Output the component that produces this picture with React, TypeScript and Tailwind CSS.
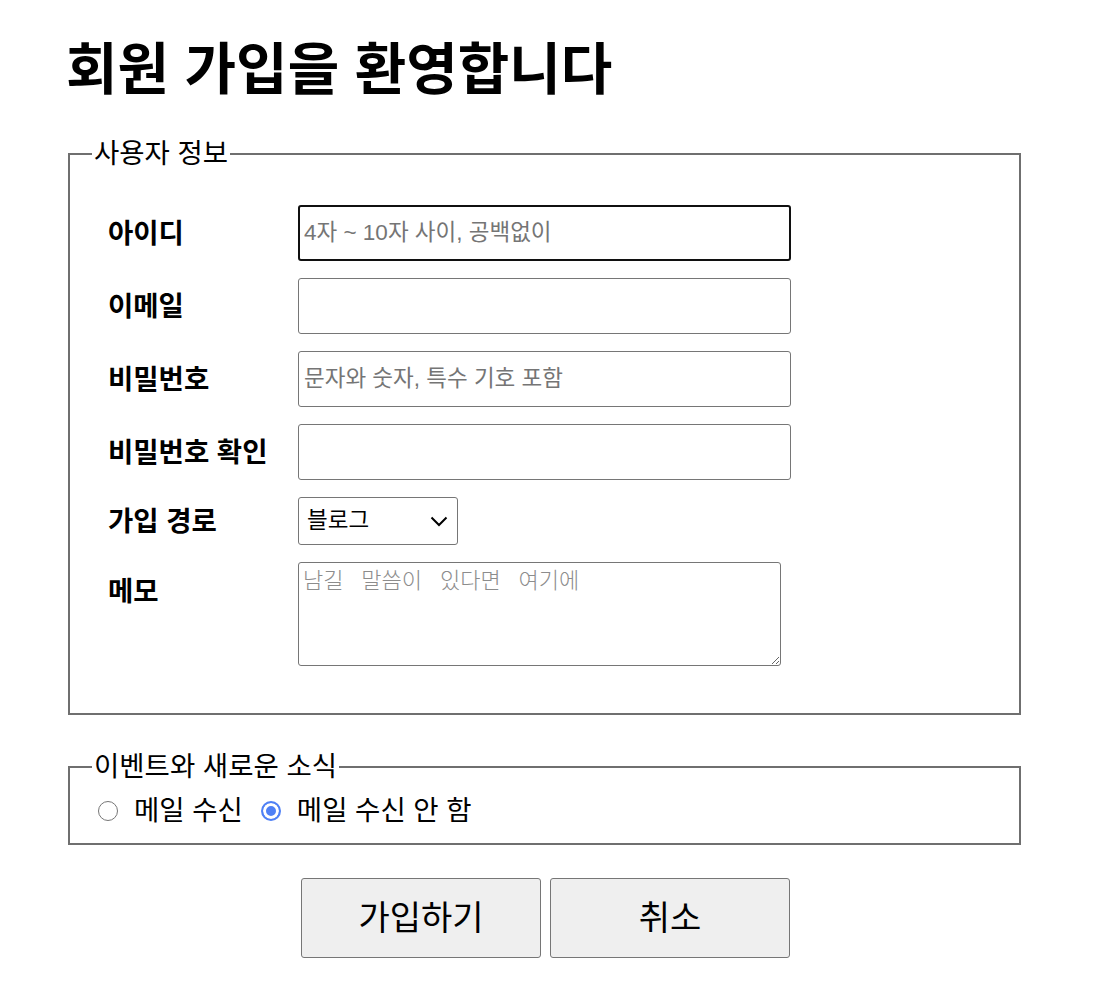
import React from 'react';

const inputBase =
  'h-[56px] w-[493px] rounded-[3px] border border-[#767676] bg-white pl-[5px] text-[22.5px] text-black placeholder:text-[#757575]';

function Row({ label, children, top }: { label: string; children: React.ReactNode; top?: boolean }) {
  return (
    <div className={top ? 'flex items-start' : 'flex items-center'}>
      <label className={'w-[190px] shrink-0 text-[27.5px] font-bold leading-[35px]' + (top ? ' mt-[12px]' : '')}>
        {label}
      </label>
      {children}
    </div>
  );
}

export default function App() {
  return (
    <div className="min-h-[1002px] bg-white pt-[42px] pl-[66px] pr-[75px] text-black font-['Liberation_Sans','Noto_Sans_CJK_KR',sans-serif]">
      <h1 className="text-[56px] font-bold leading-none">회원 가입을 환영합니다</h1>

      <fieldset className="mx-[2px] mt-[38px] border-2 border-[#6f6f6f] px-[22px] pb-[47px]">
        <legend className="px-[2px] text-[27.5px] leading-[35px]">사용자 정보</legend>
        <div className="flex flex-col gap-[17px] pt-[34px] pl-[16px]">
          <Row label="아이디">
            <input
              type="text"
              placeholder="4자 ~ 10자 사이, 공백없이"
              className="h-[56px] w-[493px] rounded-[3px] border-2 border-[#101010] bg-white pl-[4px] text-[22.5px] text-black placeholder:text-[#757575]"
            />
          </Row>
          <Row label="이메일">
            <input type="email" className={inputBase} />
          </Row>
          <Row label="비밀번호">
            <input type="password" placeholder="문자와 숫자, 특수 기호 포함" className={inputBase} />
          </Row>
          <Row label="비밀번호 확인">
            <input type="password" className={inputBase} />
          </Row>
          <Row label="가입 경로">
            <div className="relative">
              <select
                defaultValue="블로그"
                className="h-[48px] w-[160px] appearance-none rounded-[3px] border border-[#767676] bg-white pl-[8px] text-[22.5px] text-black"
              >
                <option>블로그</option>
                <option>검색</option>
                <option>지인 추천</option>
                <option>기타</option>
              </select>
              <svg
                className="pointer-events-none absolute right-[10px] top-[19px]"
                width="18"
                height="11"
                viewBox="0 0 18 11"
                fill="none"
              >
                <path d="M1.5 1.5 L9 9 L16.5 1.5" stroke="#000" strokeWidth="2" />
              </svg>
            </div>
          </Row>
          <Row label="메모" top>
            <textarea
              placeholder="남길 말씀이 있다면 여기에"
              className="h-[104px] w-[483px] rounded-[3px] border border-[#767676] bg-white pl-[4px] pt-[2px] text-[22px] leading-[26px] font-light text-black [word-spacing:13px] font-['Noto_Sans_CJK_KR',sans-serif] placeholder:text-[#8c8c8c]"
            />
          </Row>
        </div>
      </fieldset>

      <fieldset className="mx-[2px] mt-[34px] border-2 border-[#6f6f6f] px-[22px] pb-[15px]">
        <legend className="px-[2px] text-[27.5px] leading-[35px]">이벤트와 새로운 소식</legend>
        <div className="flex items-center pt-[9px] text-[27.5px] leading-[35px]">
          <input
            type="radio"
            name="mail"
            id="mail-yes"
            className="ml-[6px] h-5 w-5 appearance-none rounded-full border border-[#767676] bg-white checked:border-2 checked:border-[#4f80f5] checked:bg-[#4f80f5] checked:shadow-[inset_0_0_0_3px_white]"
          />
          <label htmlFor="mail-yes" className="ml-[16px]">
            메일 수신
          </label>
          <input
            type="radio"
            name="mail"
            id="mail-no"
            defaultChecked
            className="ml-[18px] h-5 w-5 appearance-none rounded-full border border-[#767676] bg-white checked:border-2 checked:border-[#4f80f5] checked:bg-[#4f80f5] checked:shadow-[inset_0_0_0_3px_white]"
          />
          <label htmlFor="mail-no" className="ml-[16px]">
            메일 수신 안 함
          </label>
        </div>
      </fieldset>

      <div className="mt-[33px] flex justify-center gap-[9px] pl-[2px]">
        <button className="h-[80px] w-[240px] rounded-[3px] border border-[#767676] bg-[#efefef] text-[34px]">
          가입하기
        </button>
        <button className="h-[80px] w-[240px] rounded-[3px] border border-[#767676] bg-[#efefef] text-[34px]">
          취소
        </button>
      </div>
    </div>
  );
}
